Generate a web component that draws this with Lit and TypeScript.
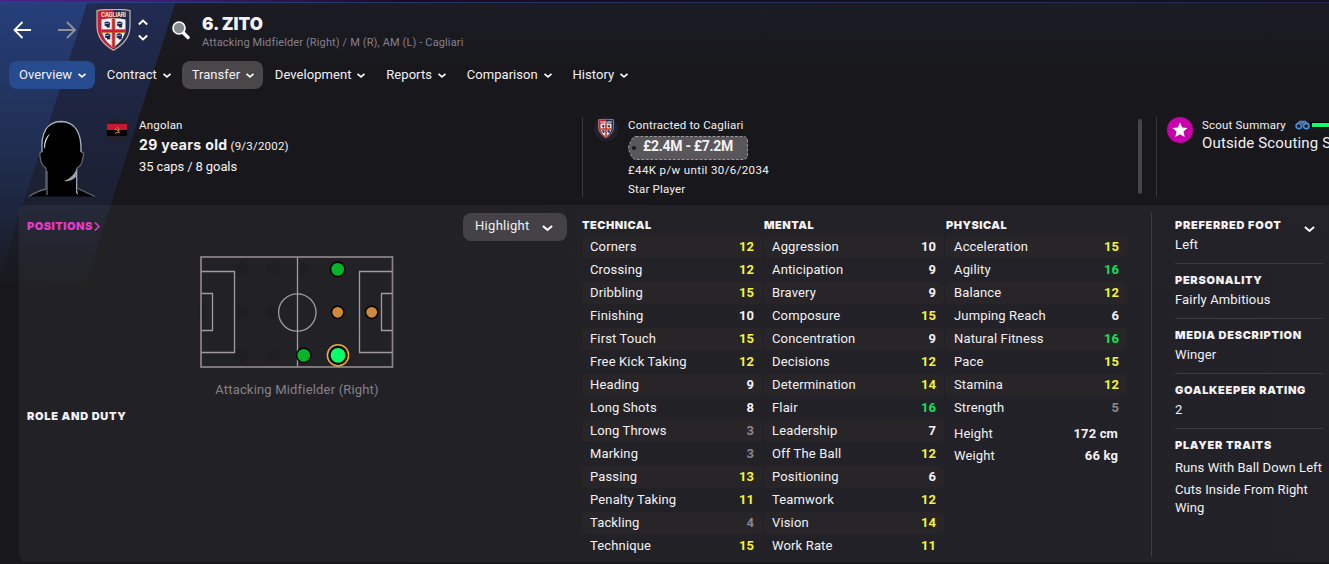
import { css, html, svg, LitElement } from "lit";
import { customElement, property } from "lit/decorators.js";
import { classMap } from "lit/directives/class-map.js";

type Attribute = [string, number];

const TECHNICAL: Attribute[] = [
  ['Corners', 12], ['Crossing', 12], ['Dribbling', 15], ['Finishing', 10],
  ['First Touch', 15], ['Free Kick Taking', 12], ['Heading', 9], ['Long Shots', 8],
  ['Long Throws', 3], ['Marking', 3], ['Passing', 13], ['Penalty Taking', 11],
  ['Tackling', 4], ['Technique', 15],
];

const MENTAL: Attribute[] = [
  ['Aggression', 10], ['Anticipation', 9], ['Bravery', 9], ['Composure', 15],
  ['Concentration', 9], ['Decisions', 12], ['Determination', 14], ['Flair', 16],
  ['Leadership', 7], ['Off The Ball', 12], ['Positioning', 6], ['Teamwork', 12],
  ['Vision', 14], ['Work Rate', 11],
];

const PHYSICAL: Attribute[] = [
  ['Acceleration', 15], ['Agility', 16], ['Balance', 12], ['Jumping Reach', 6],
  ['Natural Fitness', 16], ['Pace', 15], ['Stamina', 12], ['Strength', 5],
];

const MENU = ['Overview', 'Contract', 'Transfer', 'Development', 'Reports', 'Comparison', 'History'];

const chevron = (size: number) => html`<svg width=${size} height=${size} viewBox="0 0 10 10">
  <path d="M1.5 3.8 L5 6.9 L8.5 3.8" fill="none" stroke="#fff" stroke-width="1.6"/>
</svg>`;

const crestHead = (x: number, y: number) => svg`<g transform="translate(${x} ${y})">
  <path d="M-3 -1.5 Q-2.5 -3.4 0 -3.2 Q2.8 -3 2.8 -.5 L2.2 1 L2.6 2.8 L-.5 3 L-1 1.6 L-2.6 1.2Z" fill="#1b2550"/>
  <path d="M-3 -.8 L1.8 -1.4" stroke="#b9bfd2" stroke-width=".8"/>
</g>`;

@customElement('club-crest')
export class ClubCrest extends LitElement {
  @property({ type: Number })
  width = 35;

  render () {
    return html`<svg width=${this.width} height=${this.width * 1.2} viewBox="0 0 35 42">
      <path d="M1 1.5 Q17.5 -.8 34 1.5 V17 Q34 32 17.5 41.3 Q1 32 1 17Z" fill="#c31f3a"/>
      <path d="M17.5 .4 Q26 .4 34 1.5 V17 Q34 32 17.5 41.3Z" fill="#1f2c59"/>
      <path d="M5.5 10.5 Q17.5 8 29.5 10.5 V19 Q29 31 17.5 38.5 Q6 31 5.5 19Z" fill="#f5f3f2"/>
      <path d="M17.5 9.5 V38.5 M5.5 22 H29.5" stroke="#cf9a3f" stroke-width="4"/>
      <path d="M17.5 9.5 V38.5 M5.5 22 H29.5" stroke="#c9203a" stroke-width="2.4"/>
      ${crestHead(11.4, 15.6)}${crestHead(23.8, 15.6)}${crestHead(11.8, 27.5)}${crestHead(23.4, 27.5)}
      <text x="17.5" y="7.8" text-anchor="middle" textLength="25" class="name">CAGLIARI</text>
      <path d="M1 1.5 Q17.5 -.8 34 1.5 V17 Q34 32 17.5 41.3 Q1 32 1 17Z" fill="none" stroke="#c8b6a2" stroke-width="1.2"/>
    </svg>`;
  }

  static styles = css`
    :host { display: block; line-height: 0; }
    .name { font: 800 5.6px Inter, sans-serif; fill: #f0d9b5; }
  `;
}

@customElement('attribute-column')
export class AttributeColumn extends LitElement {
  @property()
  heading = '';

  @property({ type: Array })
  rows: Attribute[] = [];

  render () {
    return html`
      <h3>${this.heading}</h3>
      ${this.rows.map(([name, value]) => html`<div class="row">
        <span>${name}</span>
        <b class=${classMap({
          great: value > 15,
          good: value > 10 && value <= 15,
          poor: value < 6,
        })}>${value}</b>
      </div>`)}`;
  }

  static styles = css`
    :host { display: block; }
    h3 {
      margin: 0;
      height: 22px;
      font: 900 11px/22px Inter, sans-serif;
      letter-spacing: .5px;
    }
    .row {
      display: flex;
      justify-content: space-between;
      height: 22px;
      margin-bottom: 1px;
      padding: 0 8px;
      line-height: 22px;
      border-radius: 4px;
    }
    .row:nth-child(even) { background: #282529; }
    b { font-weight: 700; font-size: 13px; letter-spacing: 0; }
    .good { color: #f2f43c; }
    .great { color: #12e05c; }
    .poor { color: #8b878d; }
  `;
}

@customElement('position-pitch')
export class PositionPitch extends LitElement {
  render () {
    const idle = [[44, 15], [75, 15], [105, 15], [2, 58], [44, 58], [75, 58], [44, 101], [75, 101]];
    return html`<svg width="198" height="116" viewBox="0 0 198 116">
      ${idle.map(([x, y]) => svg`<circle cx=${x} cy=${y} r="6.5" fill="#1f1e21"/>`)}
      <g fill="none" stroke="#a09da1" stroke-width="1.3">
        <path d="M3 17.5 H36.5 V98.5 H3 M3 39.5 H14.5 V76.5 H3"/>
        <path d="M194 17.5 H161.5 V98.5 H194 M194 39.5 H183.5 V76.5 H194"/>
        <path d="M99.5 3 V113"/>
        <circle cx="99.3" cy="58.5" r="18.7"/>
      </g>
      <rect x="3" y="3" width="191.5" height="110" fill="none" stroke="#8b8587" stroke-width="1.7"/>
      <g stroke="#070807" stroke-width="1.6">
        <circle cx="139.7" cy="15.3" r="7.2" fill="#07b42c"/>
        <circle cx="139.7" cy="58.3" r="6.2" fill="#cf8840"/>
        <circle cx="173.7" cy="58.3" r="6.2" fill="#cf8840"/>
        <circle cx="105.7" cy="101.3" r="7.2" fill="#07b42c"/>
        <circle cx="140" cy="101.3" r="10.6" fill="#111" stroke="#f0ac3a" stroke-width="1.5"/>
        <circle cx="140" cy="101.3" r="8.2" fill="#08ff68"/>
      </g>
    </svg>`;
  }

  static styles = css`:host { display: block; line-height: 0; }`;
}

@customElement('app-root')
export class AppRoot extends LitElement {
  render () {
    return html`
      <header>
        <svg class="arrows" width="70" height="24" viewBox="0 0 70 24" fill="none" stroke-width="1.8">
          <path d="M24 12 H8 M15.5 4 L7.5 12 L15.5 20" stroke="#fff"/>
          <path d="M51 12 H67.5 M60 4 L68 12 L60 20" stroke="#8f919b"/>
        </svg>
        <club-crest></club-crest>
        <svg class="stepper" width="12" height="24" viewBox="0 0 12 24" fill="none" stroke="#fff" stroke-width="1.9">
          <path d="M1.8 6.5 L6 2.5 L10.2 6.5 M1.8 17.5 L6 21.5 L10.2 17.5"/>
        </svg>
        <svg class="search" width="20" height="20" viewBox="0 0 20 20">
          <path d="M11.5 12 L17 17.5" stroke="#fff" stroke-width="3.4" stroke-linecap="round"/>
          <circle cx="8" cy="8" r="6" fill="#858b90" stroke="#fff" stroke-width="1.6"/>
        </svg>
        <div>
          <h1>6. ZITO</h1>
          <div class="subtitle">Attacking Midfielder (Right) / M (R), AM (L) - Cagliari</div>
        </div>
      </header>

      <nav>
        ${MENU.map((item) => html`<a class=${classMap({
          current: item === 'Overview',
          hovered: item === 'Transfer',
        })}>${item}${chevron(10)}</a>`)}
      </nav>

      <section class="info">
        <svg class="portrait" width="72" height="80" viewBox="0 0 72 80">
          <path d="M2 77.5 Q8 73 19 70 V49 Q14 47 13 37 Q12 33 15 33 Q12 2 34 2 Q56 2 54 33 Q58 33 56 38 Q55 47 50 49 V69 Q60 74 68 77.5Z" fill="#000"/>
          <path d="M2 77.5 Q8 73 19 70 V49 Q14 47 13 37 Q12 33 15 33 M54 33 Q58 33 56 38 Q55 47 50 49 V69 Q60 74 68 77.5" fill="none" stroke="#66656c" stroke-width="1.3"/>
          <path d="M15 33 Q13 3 34 2.5 Q55 3 54 33" fill="none" stroke="#aab3c2" stroke-width="1.3"/>
          <path d="M17 28 Q17 19 23 14.5 L20 20 Q18 24 18 30Z" fill="#dbe0e8"/>
          <path d="M37 62 Q46 59 50 49 V69 L51 76 L49 74 V58 Q44 63 37 62Z" fill="#9aa0ac"/>
          <path d="M20 52 V76" stroke="#66666b" stroke-width="1.4"/>
        </svg>
        <svg class="flag" width="24" height="24" viewBox="0 0 24 24">
          <circle cx="12" cy="12" r="11.5" fill="#222127"/>
          <path d="M2 6 H22 V12 H2Z" fill="#c61735"/>
          <path d="M2 12 H22 V18 H2Z" fill="#000"/>
          <path d="M10 10.5 L14.5 14 M10 15 L14.5 14.5 M12 9 Q15.5 10.5 13.5 14" fill="none" stroke="#d88b35"/>
        </svg>
        <div class="bio">
          <div class="small">Angolan</div>
          <div class="age"><b>29 years old</b> (9/3/2002)</div>
          <div class="caps">35 caps / 8 goals</div>
        </div>
        <div class="contract">
          <div class="badge"><club-crest width="16"></club-crest></div>
          <div class="small lines">
            <div>Contracted to Cagliari</div>
            <div class="price">
              <svg width="120" height="24" viewBox="0 0 120 24">
                <path d="M8 .5 H115 Q119.5 .5 119.5 5 V19 Q119.5 23.5 115 23.5 H8 Q5 23.5 3.5 20 L.8 14 Q0 12 .8 10 L3.5 4 Q5 .5 8 .5Z" fill="#5a575b" stroke="#99969a" stroke-dasharray="3 1.5"/>
                <circle cx="6" cy="12" r="2" fill="#1a191e"/>
              </svg>
              <b>£2.4M - £7.2M</b>
            </div>
            <div class="wage">£44K p/w until 30/6/2034</div>
            <div>Star Player</div>
          </div>
          <div class="scroll"></div>
        </div>
        <div class="scout">
          <svg width="26" height="26" viewBox="0 0 26 26">
            <circle cx="13" cy="13" r="13" fill="#c800ac"/>
            <path d="M13 5.5 L15.2 10.5 L20.5 11 L16.5 14.6 L17.7 20 L13 17.2 L8.3 20 L9.5 14.6 L5.5 11 L10.8 10.5Z" fill="#fff"/>
          </svg>
          <div>
            <div class="small scouthead">Scout Summary
              <svg width="38" height="12" viewBox="0 0 38 12">
                <path d="M15 3 H38 V9 H15Z" fill="#000"/>
                <path d="M17 4 H38 V8 H17Z" fill="#12ff6c"/>
                <g fill="#10151f" stroke="#4b92dd" stroke-width="1.7">
                  <path d="M3 4.5 L5 2.5 H6.5 L7.5 4 L8.5 2.5 H10 L12 4.5"/>
                  <circle cx="3.8" cy="7" r="2.7"/><circle cx="11.2" cy="7" r="2.7"/>
                </g>
              </svg>
            </div>
            <div class="level">Outside Scouting Scope</div>
          </div>
        </div>
      </section>

      <main>
        <section class="positions">
          <div class="bar">
            <h3 class="link">POSITIONS<svg width="8" height="11" viewBox="0 0 8 11"><path d="M2 1.5 L6 5.5 L2 9.5" fill="none" stroke="#e23bc5" stroke-width="1.7"/></svg></h3>
            <button>Highlight ${chevron(13)}</button>
          </div>
          <position-pitch></position-pitch>
          <div class="role">Attacking Midfielder (Right)</div>
          <h3>ROLE AND DUTY</h3>
        </section>

        <attribute-column heading="TECHNICAL" .rows=${TECHNICAL}></attribute-column>
        <attribute-column heading="MENTAL" .rows=${MENTAL}></attribute-column>
        <div>
          <attribute-column heading="PHYSICAL" .rows=${PHYSICAL}></attribute-column>
          <dl>
            <dt>Height</dt><dd>172 cm</dd>
            <dt>Weight</dt><dd>66 kg</dd>
          </dl>
        </div>

        <aside>
          <div class="fact"><h3>PREFERRED FOOT ${chevron(13)}</h3><p>Left</p></div>
          <div class="fact"><h3>PERSONALITY</h3><p>Fairly Ambitious</p></div>
          <div class="fact"><h3>MEDIA DESCRIPTION</h3><p>Winger</p></div>
          <div class="fact"><h3>GOALKEEPER RATING</h3><p>2</p></div>
          <div class="fact traits"><h3>PLAYER TRAITS</h3>
            <p>Runs With Ball Down Left</p>
            <p>Cuts Inside From Right Wing</p>
          </div>
        </aside>
      </main>`;
  }

  static styles = css`
    :host {
      display: flex;
      flex-direction: column;
      box-sizing: border-box;
      width: 1329px;
      height: 564px;
      overflow: hidden;
      padding-top: 2px;
      color: #f2f1f3;
      font: 400 13px/18px Roboto, sans-serif;
      letter-spacing: .15px;
      background:
        linear-gradient(90deg, #2b4683, #263766 30%, #20294a) 0 2px / 100% 1px no-repeat,
        linear-gradient(90deg, #4c2390, #3b1c70 180px, #170c25 400px, #151022) 0 0 / 100% 2px no-repeat,
        linear-gradient(180deg, rgba(24, 24, 27, 0), rgba(24, 24, 27, .3) 100px, rgba(24, 24, 27, .6) 200px, #18181b 290px) 0 0 / 200px 300px no-repeat,
        linear-gradient(107.75deg, #263f7b 84px, #212b52 84px 168px, transparent 168px) 0 0 / 200px 300px no-repeat,
        linear-gradient(180deg, #1b1c25, #18181c 70px, #18171c);
    }
    h1, h3, p, dl, dd { margin: 0; }
    h3 { font: 900 11px/16px Inter, sans-serif; letter-spacing: .7px; }
    b { font-weight: 700; }
    svg { flex: none; }

    header { display: flex; height: 57px; padding-left: 7px; }
    .arrows { margin-top: 16px; }
    header club-crest { margin: 7px 0 0 19px; }
    .stepper { margin: 16px 0 0 6px; }
    .search { margin: 18px 0 0 22px; }
    h1 { margin: 12px 0 0 11px; font: 900 17px/20px Inter, sans-serif; letter-spacing: 0; }
    .subtitle { margin: 0 0 0 11px; font-size: 11px; color: #85818c; letter-spacing: .13px; }

    nav { display: flex; padding: 2px 0 0 9px; height: 39px; letter-spacing: .06px; }
    nav a {
      display: flex;
      align-items: center;
      gap: 4.7px;
      height: 28px;
      padding: 0 8px 0 10px;
      border-radius: 8px;
      margin-right: 2px;
    }
    .current { background: #264b8f; }
    .hovered { background: #4a474b; }

    .info { display: flex; height: 105px; padding: 17px 0 0 27px; box-sizing: border-box; }
    .info > * { flex: none; }
    .portrait { margin-top: 2px; }
    .flag { margin: 1px 0 0 6px; }
    .bio { width: 453px; padding-left: 10px; box-sizing: border-box; }
    .small { font-size: 11.5px; line-height: 16px; letter-spacing: .2px; }
    .age { font-size: 11.5px; line-height: 20px; margin: 2px 0 2px; letter-spacing: .2px; }
    .age b { font: 700 14px/20px Inter, sans-serif; letter-spacing: .37px; }
    .caps { letter-spacing: -.1px; }
    .contract {
      display: flex;
      width: 574px;
      height: 80px;
      box-sizing: border-box;
      border-left: 1px solid #3a363c;
    }
    .badge {
      display: flex;
      justify-content: center;
      align-items: center;
      width: 24px;
      height: 24px;
      margin: 0 10px 0 11px;
      border-radius: 50%;
      background: #222127;
    }
    .lines { flex: 1; line-height: 19px; }
    .lines > div:first-child { line-height: 16px; }
    .wage { letter-spacing: .38px; }
    .price { display: grid; width: 120px; height: 24px; margin: 2px 0 1px; padding-top: 1px; }
    .price > * { grid-area: 1 / 1; }
    .price b { font-size: 14px; line-height: 21px; padding-left: 15px; letter-spacing: -.3px; }
    .scroll { width: 4px; height: 75px; margin: 2px 14px 0 0; border-radius: 2px; background: #484549; }
    .scout { display: flex; height: 80px; border-left: 1px solid #3a363c; padding-left: 10px; gap: 9px; }
    .scouthead { display: flex; align-items: center; gap: 9px; height: 16px; margin-bottom: 1px; }
    .level { font-size: 15px; line-height: 18px; white-space: nowrap; }

    main {
      display: grid;
      grid-template-columns: 553px 180px 180px 181px 1fr;
      column-gap: 2px;
      height: 357px;
      box-sizing: border-box;
      margin-left: 19px;
      padding: 8px 0 0 8px;
      border-radius: 8px 0 0 8px;
      background: linear-gradient(90deg, rgba(255, 255, 255, .045), rgba(230, 230, 255, .05));
    }
    attribute-column { line-height: 18px; margin-top: 1px; }
    .bar { display: flex; justify-content: space-between; align-items: flex-start; height: 41px; padding-right: 13px; }
    .link { display: flex; align-items: center; margin-top: 5px; color: #e23bc5; letter-spacing: .5px; }
    button {
      display: flex;
      align-items: center;
      gap: 11px;
      width: 104px;
      height: 28px;
      padding: 0 0 2px 12px;
      border: 0;
      border-radius: 8px;
      background: #444246;
      color: inherit;
      font: inherit;
      letter-spacing: .3px;
    }
    button svg { margin-top: 3px; }
    position-pitch { margin-left: 171px; }
    .role { width: 540px; margin: 11px 0 9px; text-align: center; color: #858189; letter-spacing: .18px; }
    dl { display: grid; grid-template-columns: 1fr auto; line-height: 22px; padding: 3px 9px 0 8px; }
    dd { font-weight: 700; text-align: right; }
    aside { margin: 0 0 5px 22px; padding: 0 6px 0 23px; border-left: 1px solid #3d3b40; }
    .fact { height: 51px; border-bottom: 1px solid #3d3b40; box-sizing: border-box; margin-bottom: 4px; }
    .fact h3 { display: flex; justify-content: space-between; height: 16px; padding: 4px 7px 3px 0; white-space: nowrap; }
    .fact h3 svg { margin-top: 5px; }
    .traits { border: 0; letter-spacing: .08px; }
    .traits p { margin: 0 -4px 4px 0; }
    .fact.traits h3 { padding-bottom: 6px; }
  `;
}
